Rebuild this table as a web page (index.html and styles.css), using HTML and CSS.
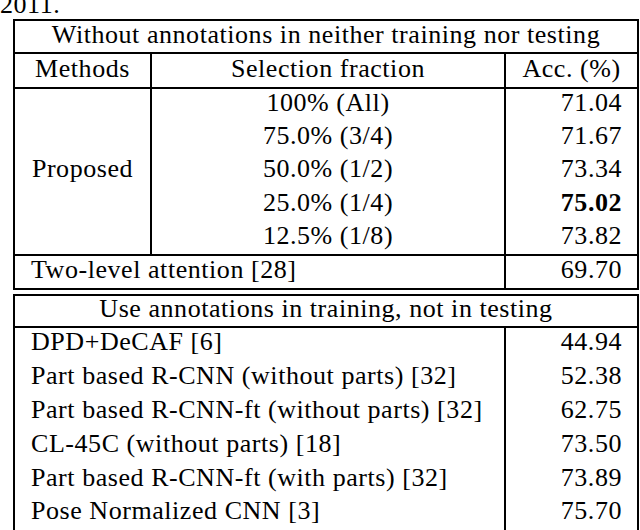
FILE: index.html
```html
<!DOCTYPE html>
<html>
<head>
<meta charset="utf-8">
<link rel="stylesheet" href="styles.css">
</head>
<body>
<div class="yr">2011.</div>
<table class="t t1">
  <colgroup><col class="c1"><col class="c2"><col class="c3"></colgroup>
  <tr class="h1 sep"><th colspan="3" class="center">Without annotations in neither training nor testing</th></tr>
  <tr class="h2 sep"><th class="center vr">Methods</th><th class="center vr">Selection fraction</th><th class="center">Acc. (%)</th></tr>
  <tr class="pr"><td rowspan="5" class="center vr sepcell">Proposed</td><td class="center vr">100% (All)</td><td class="num">71.04</td></tr>
  <tr class="pr"><td class="center vr">75.0% (3/4)</td><td class="num">71.67</td></tr>
  <tr class="pr"><td class="center vr">50.0% (1/2)</td><td class="num">73.34</td></tr>
  <tr class="pr"><td class="center vr">25.0% (1/4)</td><td class="num"><b>75.02</b></td></tr>
  <tr class="pr sep"><td class="center vr">12.5% (1/8)</td><td class="num">73.82</td></tr>
  <tr class="h3"><td colspan="2" class="vr">Two-level attention [28]</td><td class="num">69.70</td></tr>
</table>
<table class="t t2">
  <colgroup><col class="d1"><col class="d2"></colgroup>
  <tr class="h0 sep"><th colspan="2" class="center">Use annotations in training, not in testing</th></tr>
  <tr class="rw"><td class="vr">DPD+DeCAF [6]</td><td class="num">44.94</td></tr>
  <tr class="rw"><td class="vr">Part based R-CNN (without parts) [32]</td><td class="num">52.38</td></tr>
  <tr class="rw"><td class="vr">Part based R-CNN-ft (without parts) [32]</td><td class="num">62.75</td></tr>
  <tr class="rw"><td class="vr">CL-45C (without parts) [18]</td><td class="num">73.50</td></tr>
  <tr class="rw"><td class="vr">Part based R-CNN-ft (with parts) [32]</td><td class="num">73.89</td></tr>
  <tr class="rw"><td class="vr">Pose Normalized CNN [3]</td><td class="num">75.70</td></tr>
</table>
</body>
</html>
```

FILE: styles.css
```css
* { box-sizing: border-box; }

body {
  margin: 0;
  background: #fff;
  color: #000;
  font-family: "Liberation Serif", "Times New Roman", serif;
  font-size: 26px;
  letter-spacing: 0.55px;
}

.yr {
  height: 19px;
  line-height: 9px;
  white-space: nowrap;
}

.t {
  border-collapse: collapse;
  table-layout: fixed;
  margin-left: 13px;
  width: 624px;
  border: 2px solid #000;
  font-size: 26px;
}

.t2 { margin-top: 4px; }

.c1 { width: 137px; }
.c2 { width: 354px; }
.c3 { width: 133px; }
.d1 { width: 491px; }
.d2 { width: 133px; }

th, td {
  font-weight: normal;
  white-space: nowrap;
  padding: 0 16px 4px;
  line-height: 26px;
  text-align: left;
  vertical-align: middle;
}

td.num { padding-right: 15px; }

.center { text-align: center; }
.num { text-align: right; }
.num b { font-weight: bold; }

.vr { border-right: 2px solid #000; }
.sep > th, .sep > td, .sepcell { border-bottom: 2px solid #000; }

.h1 { height: 33px; }
.h2 { height: 35px; }
.pr { height: 33.4px; }
.h3 { height: 34px; }
.h0 { height: 30px; }
.rw { height: 34px; }
```
